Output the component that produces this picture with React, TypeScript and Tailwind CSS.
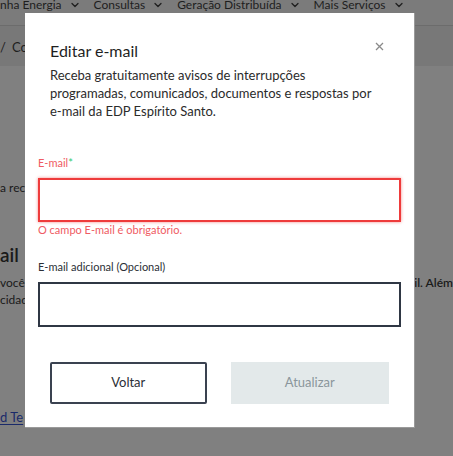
import { ChevronDown } from 'lucide-react';

const navItems = ['nha Energia', 'Consultas', 'Geração Distribuída', 'Mais Serviços'];

const EditEmailModal = () => {
  return (
    <div className="absolute left-[25px] top-[13px] w-[390px] h-[415px] bg-white border-r border-b border-[#9a9a9a] flex flex-col">
      <div className="px-[25px] pt-[27px] relative">
        <h2 className="text-[16px] leading-[22px] text-[#1f1f1f]">Editar e-mail</h2>
        <button className="absolute right-[30px] top-[29px] text-[#8a8a8a]">
          <svg width="9" height="9" viewBox="0 0 9 9" fill="none" stroke="currentColor" strokeWidth="1.3">
            <path d="M1 1l7 7M8 1L1 8" />
          </svg>
        </button>
        <p className="mt-[4px] text-[13px] leading-[18px] text-[#2b2b2b]">
          Receba gratuitamente avisos de interrupções
          <br />
          programadas, comunicados, documentos e respostas por
          <br />
          e-mail da EDP Espírito Santo.
        </p>
      </div>

      <div className="px-[13px] mt-[36px] flex flex-col">
        <label className="text-[11px] leading-[14px] text-[#ef5b63]">
          E-mail<span className="text-[#2ecc71]">*</span>
        </label>
        <input className="mt-[8px] h-[44px] border-2 border-[#ee3b3b] shadow-[0_0_3px_rgba(238,59,59,0.6)] outline-none" />
        <span className="mt-[1px] text-[11px] leading-[14px] text-[#ef5b63]">O campo E-mail é obrigatório.</span>

        <label className="mt-[23px] text-[11px] leading-[14px] text-[#2b2f36]">E-mail adicional (Opcional)</label>
        <input className="mt-[8px] h-[45px] border-2 border-[#2f3744] outline-none" />
      </div>

      <div className="px-[25px] mt-[35px] flex gap-[24px]">
        <button className="w-[157px] h-[42px] border-2 border-[#3a4250] rounded-[2px] text-[13px] text-[#2b2f36]">Voltar</button>
        <button className="w-[159px] h-[42px] bg-[#e3e9ea] text-[13px] text-[#8a969b]">Atualizar</button>
      </div>
    </div>
  );
};

export default function App() {
  return (
    <div className="relative w-[453px] h-[456px] overflow-hidden bg-[#808080] text-[#161616] font-['Lato',sans-serif]">
      <nav className="h-[31px] bg-[#7b7b7b] border-b border-[#6c6c6c] flex items-start gap-[13px] -mt-[5px]">
        {navItems.map((item) => (
          <span key={item} className="flex items-center gap-[7px] text-[12px] leading-[20px] text-[#1e1e1e]">
            {item}
            <ChevronDown size={12} strokeWidth={2.5} />
          </span>
        ))}
      </nav>
      <div className="h-[40px] bg-[#787878] flex items-center text-[13px] text-[#1e1e1e] pt-[4px]">
        <span className="mr-[6px]">/</span>Co
      </div>
      <div className="relative text-[12px] text-[#1a1a1a]">
        <p className="mt-[114px] leading-[16px]">a rec</p>
        <p className="mt-[47px] text-[19px] leading-[24px] font-semibold">ail</p>
        <div className="flex justify-between mt-[7px]">
          <p className="leading-[17px]">você</p>
          <p className="leading-[17px] font-semibold">il. Além</p>
        </div>
        <p className="leading-[17px]">cidad</p>
        <p className="mt-[100px] text-[13px] text-[#1a2a6a] underline underline-offset-2">d Te</p>
      </div>
      <EditEmailModal />
    </div>
  );
}
